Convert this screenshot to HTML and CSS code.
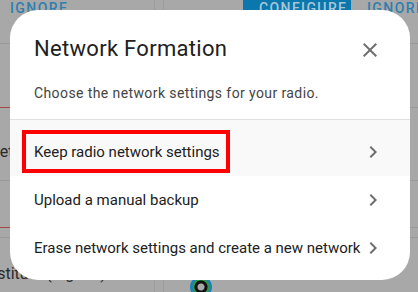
FILE: index.html
```
<!DOCTYPE html>
<html lang="en">
<head>
    <meta charset="UTF-8">
    <meta name="viewport" content="width=device-width, initial-scale=1.0">
    <title>Network Formation</title>
    <link rel="stylesheet" href="styles.css">
</head>
<body>
    <div class="page">
        <div class="card card-left">
            <div class="row row-actions"><span class="link-btn">Ignore</span></div>
            <div class="row row-a line-red"></div>
            <div class="row row-b"><span class="cut-text">Retry</span></div>
            <div class="row row-c line-red"></div>
            <div class="row row-d"></div>
            <div class="row row-e"><span class="cut-text bottom-text">Institute (Zigbee)</span></div>
        </div>
        <div class="card card-right">
            <div class="row row-actions">
                <span class="btn-filled">Configure</span>
                <span class="link-btn">Ignore</span>
            </div>
            <div class="row row-a"></div>
            <div class="row row-b"></div>
            <div class="row row-c"></div>
            <div class="row row-d"></div>
            <div class="row row-e"><span class="logo"></span></div>
        </div>
    </div>

    <div class="dialog">
        <div class="dialog-header">
            <h2>Network Formation</h2>
            <svg class="close" viewBox="0 0 24 24" width="24" height="24">
                <path d="M19 6.41L17.59 5 12 10.59 6.41 5 5 6.41 10.59 12 5 17.59 6.41 19 12 13.41 17.59 19 19 17.59 13.41 12z"/>
            </svg>
        </div>
        <p class="dialog-text">Choose the network settings for your radio.</p>
        <div class="dialog-list">
            <div class="list-item active">
                <span class="highlight">Keep radio network settings</span>
                <svg class="chevron" viewBox="0 0 24 24" width="24" height="24"><path d="M10 6L8.59 7.41 13.17 12l-4.58 4.59L10 18l6-6z"/></svg>
            </div>
            <div class="list-item">
                <span>Upload a manual backup</span>
                <svg class="chevron" viewBox="0 0 24 24" width="24" height="24"><path d="M10 6L8.59 7.41 13.17 12l-4.58 4.59L10 18l6-6z"/></svg>
            </div>
            <div class="list-item">
                <span>Erase network settings and create a new network</span>
                <svg class="chevron" viewBox="0 0 24 24" width="24" height="24"><path d="M10 6L8.59 7.41 13.17 12l-4.58 4.59L10 18l6-6z"/></svg>
            </div>
        </div>
    </div>
</body>
</html>
```

FILE: styles.css
```
body {
    font-family: Roboto, "Noto Sans", sans-serif;
    margin: 0;
    height: 292px;
    overflow: hidden;
    background: #a8a8a8;
    position: relative;
}

/* dimmed page behind the dialog */
.page {
    display: flex;
    gap: 8px;
}

.card {
    display: flex;
    flex-direction: column;
    overflow: hidden;
}

.card-left {
    flex: none;
    width: 154px;
    border-right: 1px solid #9c9c9c;
}

.card-right {
    flex: 1;
    border-left: 1px solid #9c9c9c;
}

.row {
    flex: none;
    border-bottom: 1px solid #9a9a9a;
    position: relative;
}

.row.line-red {
    border-bottom-color: #a04848;
}

.row-actions { height: 43px; display: flex; align-items: flex-start; }
.row-a { height: 63px; }
.row-b { height: 72px; }
.row-c { height: 46px; }
.row-d { height: 9px; }
.row-e { height: 60px; border-bottom: none; }

.link-btn {
    flex: none;
    color: #2f7fae;
    font-size: 14px;
    font-weight: 500;
    letter-spacing: 1.4px;
    text-transform: uppercase;
    padding: 0 10px;
    line-height: 18px;
    margin-top: -1px;
}

.btn-filled {
    flex: none;
    background: #0a77ad;
    color: #a9c6d8;
    font-size: 14px;
    font-weight: 500;
    letter-spacing: 1.4px;
    text-transform: uppercase;
    width: 108px;
    height: 30px;
    box-sizing: border-box;
    padding-left: 16px;
    line-height: 18px;
    margin-left: 79px;
    margin-top: -1px;
    margin-right: 6px;
}

.cut-text {
    color: #2a2a2a;
    font-size: 16px;
    position: absolute;
    top: 34px;
    left: -10px;
    white-space: nowrap;
}

.bottom-text {
    top: 26px;
    left: -16px;
}

.logo {
    position: absolute;
    left: 26px;
    top: 38px;
    width: 22px;
    height: 22px;
    border-radius: 50%;
    background: radial-gradient(circle, #a8a8a8 0 3px, #111 4px 6px, #2a9a4a 7px 8px, #1c7fc0 9px);
}

/* dialog */
.dialog {
    position: absolute;
    left: 10px;
    top: 10px;
    width: 400px;
    height: 270px;
    background: white;
    border-radius: 28px;
    overflow: hidden;
}

.dialog-header {
    display: flex;
    align-items: center;
    justify-content: space-between;
    padding: 25px 28px 0 24px;
}

.dialog-header h2 {
    margin: 0;
    font-size: 22px;
    font-weight: 400;
    line-height: 28px;
    letter-spacing: 0.3px;
    color: #212121;
}

.close {
    fill: #6f6f6f;
    margin-top: 2px;
}

.dialog-text {
    margin: 20px 24px 0;
    padding-bottom: 16px;
    font-size: 14px;
    line-height: 20px;
    color: #444;
    letter-spacing: 0.4px;
}

.dialog-list {
    border-top: 1px solid #e0e0e0;
    padding-top: 8px;
}

.list-item {
    display: flex;
    align-items: center;
    justify-content: space-between;
    height: 48px;
    padding: 0 25px 0 24px;
    font-size: 15px;
    color: #212121;
    white-space: nowrap;
}

.list-item.active {
    background: #f9f9f9;
    margin-top: -8px;
    padding-top: 8px;
}

.highlight {
    position: relative;
}

.highlight::after {
    content: "";
    position: absolute;
    top: -13px;
    bottom: -12px;
    left: -12px;
    right: -10px;
    border: 4px solid #ff0000;
}

.chevron {
    fill: #6f6f6f;
    flex-shrink: 0;
}
```
